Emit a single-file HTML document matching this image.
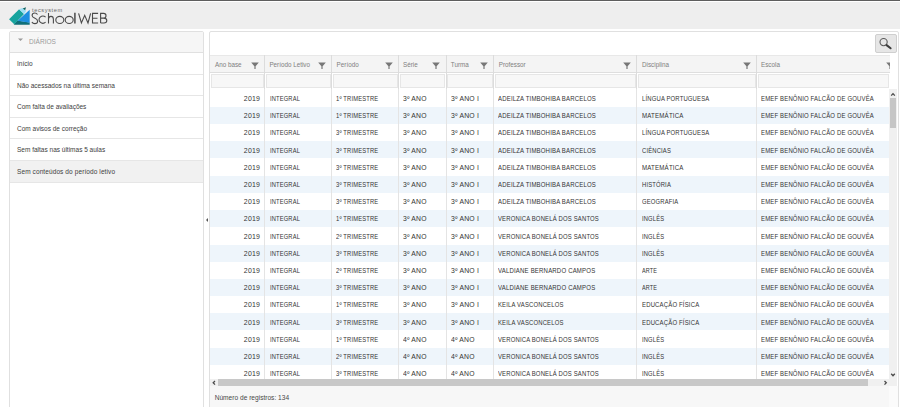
<!DOCTYPE html>
<html><head><meta charset="utf-8">
<style>
*{box-sizing:border-box;margin:0;padding:0}
html,body{width:900px;height:407px;overflow:hidden;background:#fff;font-family:"Liberation Sans",sans-serif;color:#333;position:relative}
div,span,svg{position:absolute}
.tl{white-space:nowrap;line-height:1}
#topline{left:0;top:0;width:900px;height:1px;background:#5e5e5e}
#header{left:0;top:2px;width:900px;height:27.3px;background:#eeeeee}
#lp{left:9px;top:31px;width:195px;height:400px;border:1px solid #e0e0e0;border-radius:2px;background:#fff}
#lph{left:0;top:0;width:193px;height:21px;background:#f6f6f6;border-bottom:1px solid #e0e0e0}
.tri{left:7.8px;top:6px;width:0;height:0;border-left:2.8px solid transparent;border-right:2.8px solid transparent;border-top:2.6px solid #999}
.lpt{font-size:7.4px;color:#9a9a9a;left:19px;top:5.9px;transform:scaleX(0.885);transform-origin:0 0}
.mi{left:0;width:193px;height:21.6px;border-bottom:1px solid #e6e6e6;font-size:6.5px;color:#404040;padding-left:7px;line-height:21px;white-space:nowrap}
#rp{left:209px;top:31px;width:690px;height:400px;border:1px solid #e0e0e0;border-radius:2px;background:#fff}
.hd{top:54.6px;height:18.9px;background:#f4f4f4;border-top:1px solid #e8e8e8;border-bottom:1px solid #dedede}
.ht{font-size:6.3px;color:#808080;top:62px}
.fl{top:74.3px;height:14px;background:#f7f7f7;border:1px solid #e6e6e6}
.row{left:210px;width:679px;height:17.2px}
.alt{background:#eef5fb}
.c{font-size:6.9px;letter-spacing:0.2px;color:#333;top:6.4px;transform-origin:0 0}
.vl{width:1px;background:#e4e4e4}
</style></head><body>
<div id="topline"></div>
<div id="header"></div>

<svg style="left:7px;top:5px;width:25px;height:21px" viewBox="0 0 485 407">
<polygon points="130,380 200,300 440,340 440,382 150,382" fill="#0f6f78"/>
<polygon points="440,90 440,345 205,305" fill="#1d8fe0"/>
<polygon points="40,275 235,80 330,175 140,372" fill="#17a39d"/>
<polygon points="233,81 300,58 372,110 345,160 330,175" fill="#9ee0f5"/>
<polygon points="305,66 368,44 352,104" fill="#0d5f5c"/>
</svg>
<div class="tl" style="left:32px;top:7.9px;font-size:5.6px;color:#666;letter-spacing:0.62px">tecsystem</div>
<svg style="left:0;top:0;width:120px;height:30px" viewBox="0 0 120 30" fill="none" stroke="#4a4a4a" stroke-width="1.1">
<path d="M37.5,14.5 C36.9,13.5 35.9,13 34.8,13 C33.2,13 32.1,14 32.1,15.5 C32.1,17.1 33.4,17.7 35,18.3 C36.7,18.9 37.6,19.7 37.6,21.2 C37.6,22.7 36.4,23.6 34.8,23.6 C33.5,23.6 32.5,23 31.9,21.9"/>
<path d="M45.6,17.2 A3.85,3.45 0 1 0 45.6,22.1"/>
<path d="M48.5,12.9 L48.5,23.6 M48.5,19.8 C48.5,17.6 49.7,16.4 51,16.4 C52.6,16.4 53.4,17.5 53.4,19.3 L53.4,23.6"/>
<ellipse cx="59.8" cy="19.95" rx="4.0" ry="3.55"/>
<ellipse cx="69.2" cy="19.95" rx="4.0" ry="3.55"/>
<path d="M74.9,12.8 L74.9,23.6" stroke-width="1.5"/>
<path d="M78.6,13.4 L81.4,23 L84.7,15.4 L88,23 L90.6,13.4"/>
<path d="M98.1,13.4 L92.5,13.4 L92.5,23 L98.1,23 M92.5,18.2 L97.5,18.2"/>
<path d="M100.6,23 L100.6,13.4 L103.6,13.4 C105.2,13.4 106,14.3 106,15.7 C106,17.1 105.1,18.1 103.6,18.1 L100.6,18.1 M103.6,18.1 C105.6,18.1 106.8,19.1 106.8,20.6 C106.8,22.1 105.7,23 104,23 L100.6,23"/>
</svg>

<div id="lp">
  <div id="lph"><svg style="left:7px;top:4.6px;width:7px;height:5px" viewBox="0 0 7 5"><path d="M1,1.6 L6,1.6 L3.5,4.1 Z" fill="#999"/></svg><div class="lpt tl">DIÁRIOS</div></div>
  <div class="mi" style="top:21px">Início</div>
  <div class="mi" style="top:42.6px">Não acessados na última semana</div>
  <div class="mi" style="top:64.2px">Com falta de avaliações</div>
  <div class="mi" style="top:85.8px">Com avisos de correção</div>
  <div class="mi" style="top:107.4px">Sem faltas nas últimas 5 aulas</div>
  <div class="mi" style="top:129px;background:#f1f1f1;letter-spacing:0.1px">Sem conteúdos do período letivo</div>
</div>
<div style="left:205.5px;top:217.5px;width:0;height:0;border-top:2px solid transparent;border-bottom:2px solid transparent;border-right:2px solid #555"></div>

<div id="rp"></div>

<div style="left:875px;top:34.3px;width:21.7px;height:18.5px;background:#e6e6e6;border:1px solid #cfcfcf;border-radius:2px"></div>
<svg style="left:870px;top:30px;width:30px;height:30px" viewBox="0 0 30 30" fill="none" stroke="#555">
<circle cx="13.6" cy="12.1" r="3.6" stroke-width="1.1" stroke="#5a5a5a"/>
<path d="M16.6,15.1 L20.6,18.3" stroke-width="2" stroke-linecap="round" stroke="#3c3c3c"/>
</svg>

<div class="hd" style="left:210px;width:54.5px"></div>
<div class="fl" style="left:211px;width:52.5px"></div>
<div class="hd" style="left:264.5px;width:67.0px"></div>
<div class="fl" style="left:265.5px;width:65.0px"></div>
<div class="hd" style="left:331.5px;width:67.0px"></div>
<div class="fl" style="left:332.5px;width:65.0px"></div>
<div class="hd" style="left:398.5px;width:47.5px"></div>
<div class="fl" style="left:399.5px;width:45.5px"></div>
<div class="hd" style="left:446px;width:47.5px"></div>
<div class="fl" style="left:447px;width:45.5px"></div>
<div class="hd" style="left:493.5px;width:143.0px"></div>
<div class="fl" style="left:494.5px;width:141.0px"></div>
<div class="hd" style="left:636.5px;width:120.0px"></div>
<div class="fl" style="left:637.5px;width:118.0px"></div>
<div class="hd" style="left:756.5px;width:133.5px"></div>
<div class="fl" style="left:757.5px;width:131.5px"></div>
<div style="left:264.0px;top:55px;width:1px;height:34px;background:#dcdcdc"></div>
<div style="left:331.0px;top:55px;width:1px;height:34px;background:#dcdcdc"></div>
<div style="left:398.0px;top:55px;width:1px;height:34px;background:#dcdcdc"></div>
<div style="left:445.5px;top:55px;width:1px;height:34px;background:#dcdcdc"></div>
<div style="left:493.0px;top:55px;width:1px;height:34px;background:#dcdcdc"></div>
<div style="left:636.0px;top:55px;width:1px;height:34px;background:#dcdcdc"></div>
<div style="left:756.0px;top:55px;width:1px;height:34px;background:#dcdcdc"></div>
<div class="ht tl" style="left:215px">Ano base</div>
<svg style="left:251px;top:61.5px;width:8px;height:7.5px" viewBox="0 0 8 7.5"><path d="M0.2,0.4 L7.8,0.4 L4.6,4.2 L4.6,6.9 L3.4,6.9 L3.4,4.2 Z" fill="#777"/></svg>
<div class="ht tl" style="left:269.4px">Período Letivo</div>
<svg style="left:318.3px;top:61.5px;width:8px;height:7.5px" viewBox="0 0 8 7.5"><path d="M0.2,0.4 L7.8,0.4 L4.6,4.2 L4.6,6.9 L3.4,6.9 L3.4,4.2 Z" fill="#777"/></svg>
<div class="ht tl" style="left:336.6px">Período</div>
<svg style="left:384.7px;top:61.5px;width:8px;height:7.5px" viewBox="0 0 8 7.5"><path d="M0.2,0.4 L7.8,0.4 L4.6,4.2 L4.6,6.9 L3.4,6.9 L3.4,4.2 Z" fill="#777"/></svg>
<div class="ht tl" style="left:403px">Série</div>
<svg style="left:432.3px;top:61.5px;width:8px;height:7.5px" viewBox="0 0 8 7.5"><path d="M0.2,0.4 L7.8,0.4 L4.6,4.2 L4.6,6.9 L3.4,6.9 L3.4,4.2 Z" fill="#777"/></svg>
<div class="ht tl" style="left:450.8px">Turma</div>
<svg style="left:480px;top:61.5px;width:8px;height:7.5px" viewBox="0 0 8 7.5"><path d="M0.2,0.4 L7.8,0.4 L4.6,4.2 L4.6,6.9 L3.4,6.9 L3.4,4.2 Z" fill="#777"/></svg>
<div class="ht tl" style="left:498.7px">Professor</div>
<svg style="left:623px;top:61.5px;width:8px;height:7.5px" viewBox="0 0 8 7.5"><path d="M0.2,0.4 L7.8,0.4 L4.6,4.2 L4.6,6.9 L3.4,6.9 L3.4,4.2 Z" fill="#777"/></svg>
<div class="ht tl" style="left:642px">Disciplina</div>
<svg style="left:743px;top:61.5px;width:8px;height:7.5px" viewBox="0 0 8 7.5"><path d="M0.2,0.4 L7.8,0.4 L4.6,4.2 L4.6,6.9 L3.4,6.9 L3.4,4.2 Z" fill="#777"/></svg>
<div class="ht tl" style="left:761px">Escola</div>
<svg style="left:885.6px;top:61.5px;width:8px;height:7.5px" viewBox="0 0 8 7.5"><path d="M0.2,0.4 L7.8,0.4 L4.6,4.2 L4.6,6.9 L3.4,6.9 L3.4,4.2 Z" fill="#777"/></svg>
<div class="row" style="top:89.70px">
<div class="c tl" style="right:629.2px;transform-origin:100% 0;transform:scaleX(1.010)">2019</div>
<div class="c tl" style="left:59.6px;transform:scaleX(0.832)">INTEGRAL</div>
<div class="c tl" style="left:126.4px;transform:scaleX(0.842)">1º TRIMESTRE</div>
<div class="c tl" style="left:193.0px;transform:scaleX(0.987)">3º ANO</div>
<div class="c tl" style="left:240.8px;transform:scaleX(0.991)">3º ANO I</div>
<div class="c tl" style="left:288.4px;transform:scaleX(0.873)">ADEILZA TIMBOHIBA BARCELOS</div>
<div class="c tl" style="left:431.8px;transform:scaleX(0.856)">LÍNGUA PORTUGUESA</div>
<div class="c tl" style="left:551.3px;transform:scaleX(0.865)">EMEF BENÔNIO FALCÃO DE GOUVÊA</div>
</div>
<div class="row alt" style="top:106.90px">
<div class="c tl" style="right:629.2px;transform-origin:100% 0;transform:scaleX(1.010)">2019</div>
<div class="c tl" style="left:59.6px;transform:scaleX(0.832)">INTEGRAL</div>
<div class="c tl" style="left:126.4px;transform:scaleX(0.842)">1º TRIMESTRE</div>
<div class="c tl" style="left:193.0px;transform:scaleX(0.987)">3º ANO</div>
<div class="c tl" style="left:240.8px;transform:scaleX(0.991)">3º ANO I</div>
<div class="c tl" style="left:288.4px;transform:scaleX(0.873)">ADEILZA TIMBOHIBA BARCELOS</div>
<div class="c tl" style="left:431.8px;transform:scaleX(0.891)">MATEMÁTICA</div>
<div class="c tl" style="left:551.3px;transform:scaleX(0.865)">EMEF BENÔNIO FALCÃO DE GOUVÊA</div>
</div>
<div class="row" style="top:124.10px">
<div class="c tl" style="right:629.2px;transform-origin:100% 0;transform:scaleX(1.010)">2019</div>
<div class="c tl" style="left:59.6px;transform:scaleX(0.832)">INTEGRAL</div>
<div class="c tl" style="left:126.4px;transform:scaleX(0.842)">3º TRIMESTRE</div>
<div class="c tl" style="left:193.0px;transform:scaleX(0.987)">3º ANO</div>
<div class="c tl" style="left:240.8px;transform:scaleX(0.991)">3º ANO I</div>
<div class="c tl" style="left:288.4px;transform:scaleX(0.873)">ADEILZA TIMBOHIBA BARCELOS</div>
<div class="c tl" style="left:431.8px;transform:scaleX(0.856)">LÍNGUA PORTUGUESA</div>
<div class="c tl" style="left:551.3px;transform:scaleX(0.865)">EMEF BENÔNIO FALCÃO DE GOUVÊA</div>
</div>
<div class="row alt" style="top:141.30px">
<div class="c tl" style="right:629.2px;transform-origin:100% 0;transform:scaleX(1.010)">2019</div>
<div class="c tl" style="left:59.6px;transform:scaleX(0.832)">INTEGRAL</div>
<div class="c tl" style="left:126.4px;transform:scaleX(0.842)">3º TRIMESTRE</div>
<div class="c tl" style="left:193.0px;transform:scaleX(0.987)">3º ANO</div>
<div class="c tl" style="left:240.8px;transform:scaleX(0.991)">3º ANO I</div>
<div class="c tl" style="left:288.4px;transform:scaleX(0.873)">ADEILZA TIMBOHIBA BARCELOS</div>
<div class="c tl" style="left:431.8px;transform:scaleX(0.849)">CIÊNCIAS</div>
<div class="c tl" style="left:551.3px;transform:scaleX(0.865)">EMEF BENÔNIO FALCÃO DE GOUVÊA</div>
</div>
<div class="row" style="top:158.50px">
<div class="c tl" style="right:629.2px;transform-origin:100% 0;transform:scaleX(1.010)">2019</div>
<div class="c tl" style="left:59.6px;transform:scaleX(0.832)">INTEGRAL</div>
<div class="c tl" style="left:126.4px;transform:scaleX(0.842)">3º TRIMESTRE</div>
<div class="c tl" style="left:193.0px;transform:scaleX(0.987)">3º ANO</div>
<div class="c tl" style="left:240.8px;transform:scaleX(0.991)">3º ANO I</div>
<div class="c tl" style="left:288.4px;transform:scaleX(0.873)">ADEILZA TIMBOHIBA BARCELOS</div>
<div class="c tl" style="left:431.8px;transform:scaleX(0.891)">MATEMÁTICA</div>
<div class="c tl" style="left:551.3px;transform:scaleX(0.865)">EMEF BENÔNIO FALCÃO DE GOUVÊA</div>
</div>
<div class="row alt" style="top:175.70px">
<div class="c tl" style="right:629.2px;transform-origin:100% 0;transform:scaleX(1.010)">2019</div>
<div class="c tl" style="left:59.6px;transform:scaleX(0.832)">INTEGRAL</div>
<div class="c tl" style="left:126.4px;transform:scaleX(0.842)">3º TRIMESTRE</div>
<div class="c tl" style="left:193.0px;transform:scaleX(0.987)">3º ANO</div>
<div class="c tl" style="left:240.8px;transform:scaleX(0.991)">3º ANO I</div>
<div class="c tl" style="left:288.4px;transform:scaleX(0.873)">ADEILZA TIMBOHIBA BARCELOS</div>
<div class="c tl" style="left:431.8px;transform:scaleX(0.849)">HISTÓRIA</div>
<div class="c tl" style="left:551.3px;transform:scaleX(0.865)">EMEF BENÔNIO FALCÃO DE GOUVÊA</div>
</div>
<div class="row" style="top:192.90px">
<div class="c tl" style="right:629.2px;transform-origin:100% 0;transform:scaleX(1.010)">2019</div>
<div class="c tl" style="left:59.6px;transform:scaleX(0.832)">INTEGRAL</div>
<div class="c tl" style="left:126.4px;transform:scaleX(0.842)">3º TRIMESTRE</div>
<div class="c tl" style="left:193.0px;transform:scaleX(0.987)">3º ANO</div>
<div class="c tl" style="left:240.8px;transform:scaleX(0.991)">3º ANO I</div>
<div class="c tl" style="left:288.4px;transform:scaleX(0.873)">ADEILZA TIMBOHIBA BARCELOS</div>
<div class="c tl" style="left:431.8px;transform:scaleX(0.851)">GEOGRAFIA</div>
<div class="c tl" style="left:551.3px;transform:scaleX(0.865)">EMEF BENÔNIO FALCÃO DE GOUVÊA</div>
</div>
<div class="row alt" style="top:210.10px">
<div class="c tl" style="right:629.2px;transform-origin:100% 0;transform:scaleX(1.010)">2019</div>
<div class="c tl" style="left:59.6px;transform:scaleX(0.832)">INTEGRAL</div>
<div class="c tl" style="left:126.4px;transform:scaleX(0.842)">1º TRIMESTRE</div>
<div class="c tl" style="left:193.0px;transform:scaleX(0.987)">3º ANO</div>
<div class="c tl" style="left:240.8px;transform:scaleX(0.991)">3º ANO I</div>
<div class="c tl" style="left:288.4px;transform:scaleX(0.858)">VERONICA BONELÁ DOS SANTOS</div>
<div class="c tl" style="left:431.8px;transform:scaleX(0.838)">INGLÊS</div>
<div class="c tl" style="left:551.3px;transform:scaleX(0.865)">EMEF BENÔNIO FALCÃO DE GOUVÊA</div>
</div>
<div class="row" style="top:227.30px">
<div class="c tl" style="right:629.2px;transform-origin:100% 0;transform:scaleX(1.010)">2019</div>
<div class="c tl" style="left:59.6px;transform:scaleX(0.832)">INTEGRAL</div>
<div class="c tl" style="left:126.4px;transform:scaleX(0.842)">2º TRIMESTRE</div>
<div class="c tl" style="left:193.0px;transform:scaleX(0.987)">3º ANO</div>
<div class="c tl" style="left:240.8px;transform:scaleX(0.991)">3º ANO I</div>
<div class="c tl" style="left:288.4px;transform:scaleX(0.858)">VERONICA BONELÁ DOS SANTOS</div>
<div class="c tl" style="left:431.8px;transform:scaleX(0.838)">INGLÊS</div>
<div class="c tl" style="left:551.3px;transform:scaleX(0.865)">EMEF BENÔNIO FALCÃO DE GOUVÊA</div>
</div>
<div class="row alt" style="top:244.50px">
<div class="c tl" style="right:629.2px;transform-origin:100% 0;transform:scaleX(1.010)">2019</div>
<div class="c tl" style="left:59.6px;transform:scaleX(0.832)">INTEGRAL</div>
<div class="c tl" style="left:126.4px;transform:scaleX(0.842)">3º TRIMESTRE</div>
<div class="c tl" style="left:193.0px;transform:scaleX(0.987)">3º ANO</div>
<div class="c tl" style="left:240.8px;transform:scaleX(0.991)">3º ANO I</div>
<div class="c tl" style="left:288.4px;transform:scaleX(0.858)">VERONICA BONELÁ DOS SANTOS</div>
<div class="c tl" style="left:431.8px;transform:scaleX(0.838)">INGLÊS</div>
<div class="c tl" style="left:551.3px;transform:scaleX(0.865)">EMEF BENÔNIO FALCÃO DE GOUVÊA</div>
</div>
<div class="row" style="top:261.70px">
<div class="c tl" style="right:629.2px;transform-origin:100% 0;transform:scaleX(1.010)">2019</div>
<div class="c tl" style="left:59.6px;transform:scaleX(0.832)">INTEGRAL</div>
<div class="c tl" style="left:126.4px;transform:scaleX(0.842)">2º TRIMESTRE</div>
<div class="c tl" style="left:193.0px;transform:scaleX(0.987)">3º ANO</div>
<div class="c tl" style="left:240.8px;transform:scaleX(0.991)">3º ANO I</div>
<div class="c tl" style="left:288.4px;transform:scaleX(0.876)">VALDIANE BERNARDO CAMPOS</div>
<div class="c tl" style="left:431.8px;transform:scaleX(0.797)">ARTE</div>
<div class="c tl" style="left:551.3px;transform:scaleX(0.865)">EMEF BENÔNIO FALCÃO DE GOUVÊA</div>
</div>
<div class="row alt" style="top:278.90px">
<div class="c tl" style="right:629.2px;transform-origin:100% 0;transform:scaleX(1.010)">2019</div>
<div class="c tl" style="left:59.6px;transform:scaleX(0.832)">INTEGRAL</div>
<div class="c tl" style="left:126.4px;transform:scaleX(0.842)">3º TRIMESTRE</div>
<div class="c tl" style="left:193.0px;transform:scaleX(0.987)">3º ANO</div>
<div class="c tl" style="left:240.8px;transform:scaleX(0.991)">3º ANO I</div>
<div class="c tl" style="left:288.4px;transform:scaleX(0.876)">VALDIANE BERNARDO CAMPOS</div>
<div class="c tl" style="left:431.8px;transform:scaleX(0.797)">ARTE</div>
<div class="c tl" style="left:551.3px;transform:scaleX(0.865)">EMEF BENÔNIO FALCÃO DE GOUVÊA</div>
</div>
<div class="row" style="top:296.10px">
<div class="c tl" style="right:629.2px;transform-origin:100% 0;transform:scaleX(1.010)">2019</div>
<div class="c tl" style="left:59.6px;transform:scaleX(0.832)">INTEGRAL</div>
<div class="c tl" style="left:126.4px;transform:scaleX(0.842)">1º TRIMESTRE</div>
<div class="c tl" style="left:193.0px;transform:scaleX(0.987)">3º ANO</div>
<div class="c tl" style="left:240.8px;transform:scaleX(0.991)">3º ANO I</div>
<div class="c tl" style="left:288.4px;transform:scaleX(0.858)">KEILA VASCONCELOS</div>
<div class="c tl" style="left:431.8px;transform:scaleX(0.866)">EDUCAÇÃO FÍSICA</div>
<div class="c tl" style="left:551.3px;transform:scaleX(0.865)">EMEF BENÔNIO FALCÃO DE GOUVÊA</div>
</div>
<div class="row alt" style="top:313.30px">
<div class="c tl" style="right:629.2px;transform-origin:100% 0;transform:scaleX(1.010)">2019</div>
<div class="c tl" style="left:59.6px;transform:scaleX(0.832)">INTEGRAL</div>
<div class="c tl" style="left:126.4px;transform:scaleX(0.842)">3º TRIMESTRE</div>
<div class="c tl" style="left:193.0px;transform:scaleX(0.987)">3º ANO</div>
<div class="c tl" style="left:240.8px;transform:scaleX(0.991)">3º ANO I</div>
<div class="c tl" style="left:288.4px;transform:scaleX(0.858)">KEILA VASCONCELOS</div>
<div class="c tl" style="left:431.8px;transform:scaleX(0.866)">EDUCAÇÃO FÍSICA</div>
<div class="c tl" style="left:551.3px;transform:scaleX(0.865)">EMEF BENÔNIO FALCÃO DE GOUVÊA</div>
</div>
<div class="row" style="top:330.50px">
<div class="c tl" style="right:629.2px;transform-origin:100% 0;transform:scaleX(1.010)">2019</div>
<div class="c tl" style="left:59.6px;transform:scaleX(0.832)">INTEGRAL</div>
<div class="c tl" style="left:126.4px;transform:scaleX(0.842)">1º TRIMESTRE</div>
<div class="c tl" style="left:193.0px;transform:scaleX(0.987)">4º ANO</div>
<div class="c tl" style="left:240.8px;transform:scaleX(0.987)">4º ANO</div>
<div class="c tl" style="left:288.4px;transform:scaleX(0.858)">VERONICA BONELÁ DOS SANTOS</div>
<div class="c tl" style="left:431.8px;transform:scaleX(0.838)">INGLÊS</div>
<div class="c tl" style="left:551.3px;transform:scaleX(0.865)">EMEF BENÔNIO FALCÃO DE GOUVÊA</div>
</div>
<div class="row alt" style="top:347.70px">
<div class="c tl" style="right:629.2px;transform-origin:100% 0;transform:scaleX(1.010)">2019</div>
<div class="c tl" style="left:59.6px;transform:scaleX(0.832)">INTEGRAL</div>
<div class="c tl" style="left:126.4px;transform:scaleX(0.842)">2º TRIMESTRE</div>
<div class="c tl" style="left:193.0px;transform:scaleX(0.987)">4º ANO</div>
<div class="c tl" style="left:240.8px;transform:scaleX(0.987)">4º ANO</div>
<div class="c tl" style="left:288.4px;transform:scaleX(0.858)">VERONICA BONELÁ DOS SANTOS</div>
<div class="c tl" style="left:431.8px;transform:scaleX(0.838)">INGLÊS</div>
<div class="c tl" style="left:551.3px;transform:scaleX(0.865)">EMEF BENÔNIO FALCÃO DE GOUVÊA</div>
</div>
<div class="row" style="top:364.90px">
<div class="c tl" style="right:629.2px;transform-origin:100% 0;transform:scaleX(1.010)">2019</div>
<div class="c tl" style="left:59.6px;transform:scaleX(0.832)">INTEGRAL</div>
<div class="c tl" style="left:126.4px;transform:scaleX(0.842)">3º TRIMESTRE</div>
<div class="c tl" style="left:193.0px;transform:scaleX(0.987)">4º ANO</div>
<div class="c tl" style="left:240.8px;transform:scaleX(0.987)">4º ANO</div>
<div class="c tl" style="left:288.4px;transform:scaleX(0.858)">VERONICA BONELÁ DOS SANTOS</div>
<div class="c tl" style="left:431.8px;transform:scaleX(0.838)">INGLÊS</div>
<div class="c tl" style="left:551.3px;transform:scaleX(0.865)">EMEF BENÔNIO FALCÃO DE GOUVÊA</div>
</div>
<div class="vl" style="left:264.0px;top:89px;height:290px"></div>
<div class="vl" style="left:331.0px;top:89px;height:290px"></div>
<div class="vl" style="left:398.0px;top:89px;height:290px"></div>
<div class="vl" style="left:445.5px;top:89px;height:290px"></div>
<div class="vl" style="left:493.0px;top:89px;height:290px"></div>
<div class="vl" style="left:636.0px;top:89px;height:290px"></div>
<div class="vl" style="left:756.0px;top:89px;height:290px"></div>
<div style="left:890px;top:54px;width:8px;height:35px;background:#fff"></div>
<div style="left:888.8px;top:89px;width:8.5px;height:290px;background:#f0f0f0"></div>
<div style="left:889.6px;top:97.7px;width:6.8px;height:30.5px;background:#c6c6c6"></div>
<div style="left:210px;top:379px;width:687px;height:7.4px;background:#f0f0f0"></div>
<div style="left:218.2px;top:379.2px;width:650px;height:7px;background:#c8c8c8"></div>
<div style="left:210px;top:386.4px;width:679px;height:21px;background:#f7f7f7"></div><div style="left:889px;top:386.4px;width:8.6px;height:21px;background:#fbfbfb"></div>
<div class="tl" style="left:214.7px;top:395.4px;font-size:6.6px;color:#484848">Número de registros: 134</div>
<svg style="left:0;top:0;width:900px;height:407px" viewBox="0 0 900 407" fill="none" stroke="#4a4a4a" stroke-width="1.3">
<path d="M891.2,95.6 L893,93.6 L894.8,95.6"/>
<path d="M891.2,373.8 L893,375.8 L894.8,373.8"/>
<path d="M215,381 L213.2,382.8 L215,384.6"/>
<path d="M884.5,381 L886.3,382.8 L884.5,384.6"/>
</svg>
</body></html>
